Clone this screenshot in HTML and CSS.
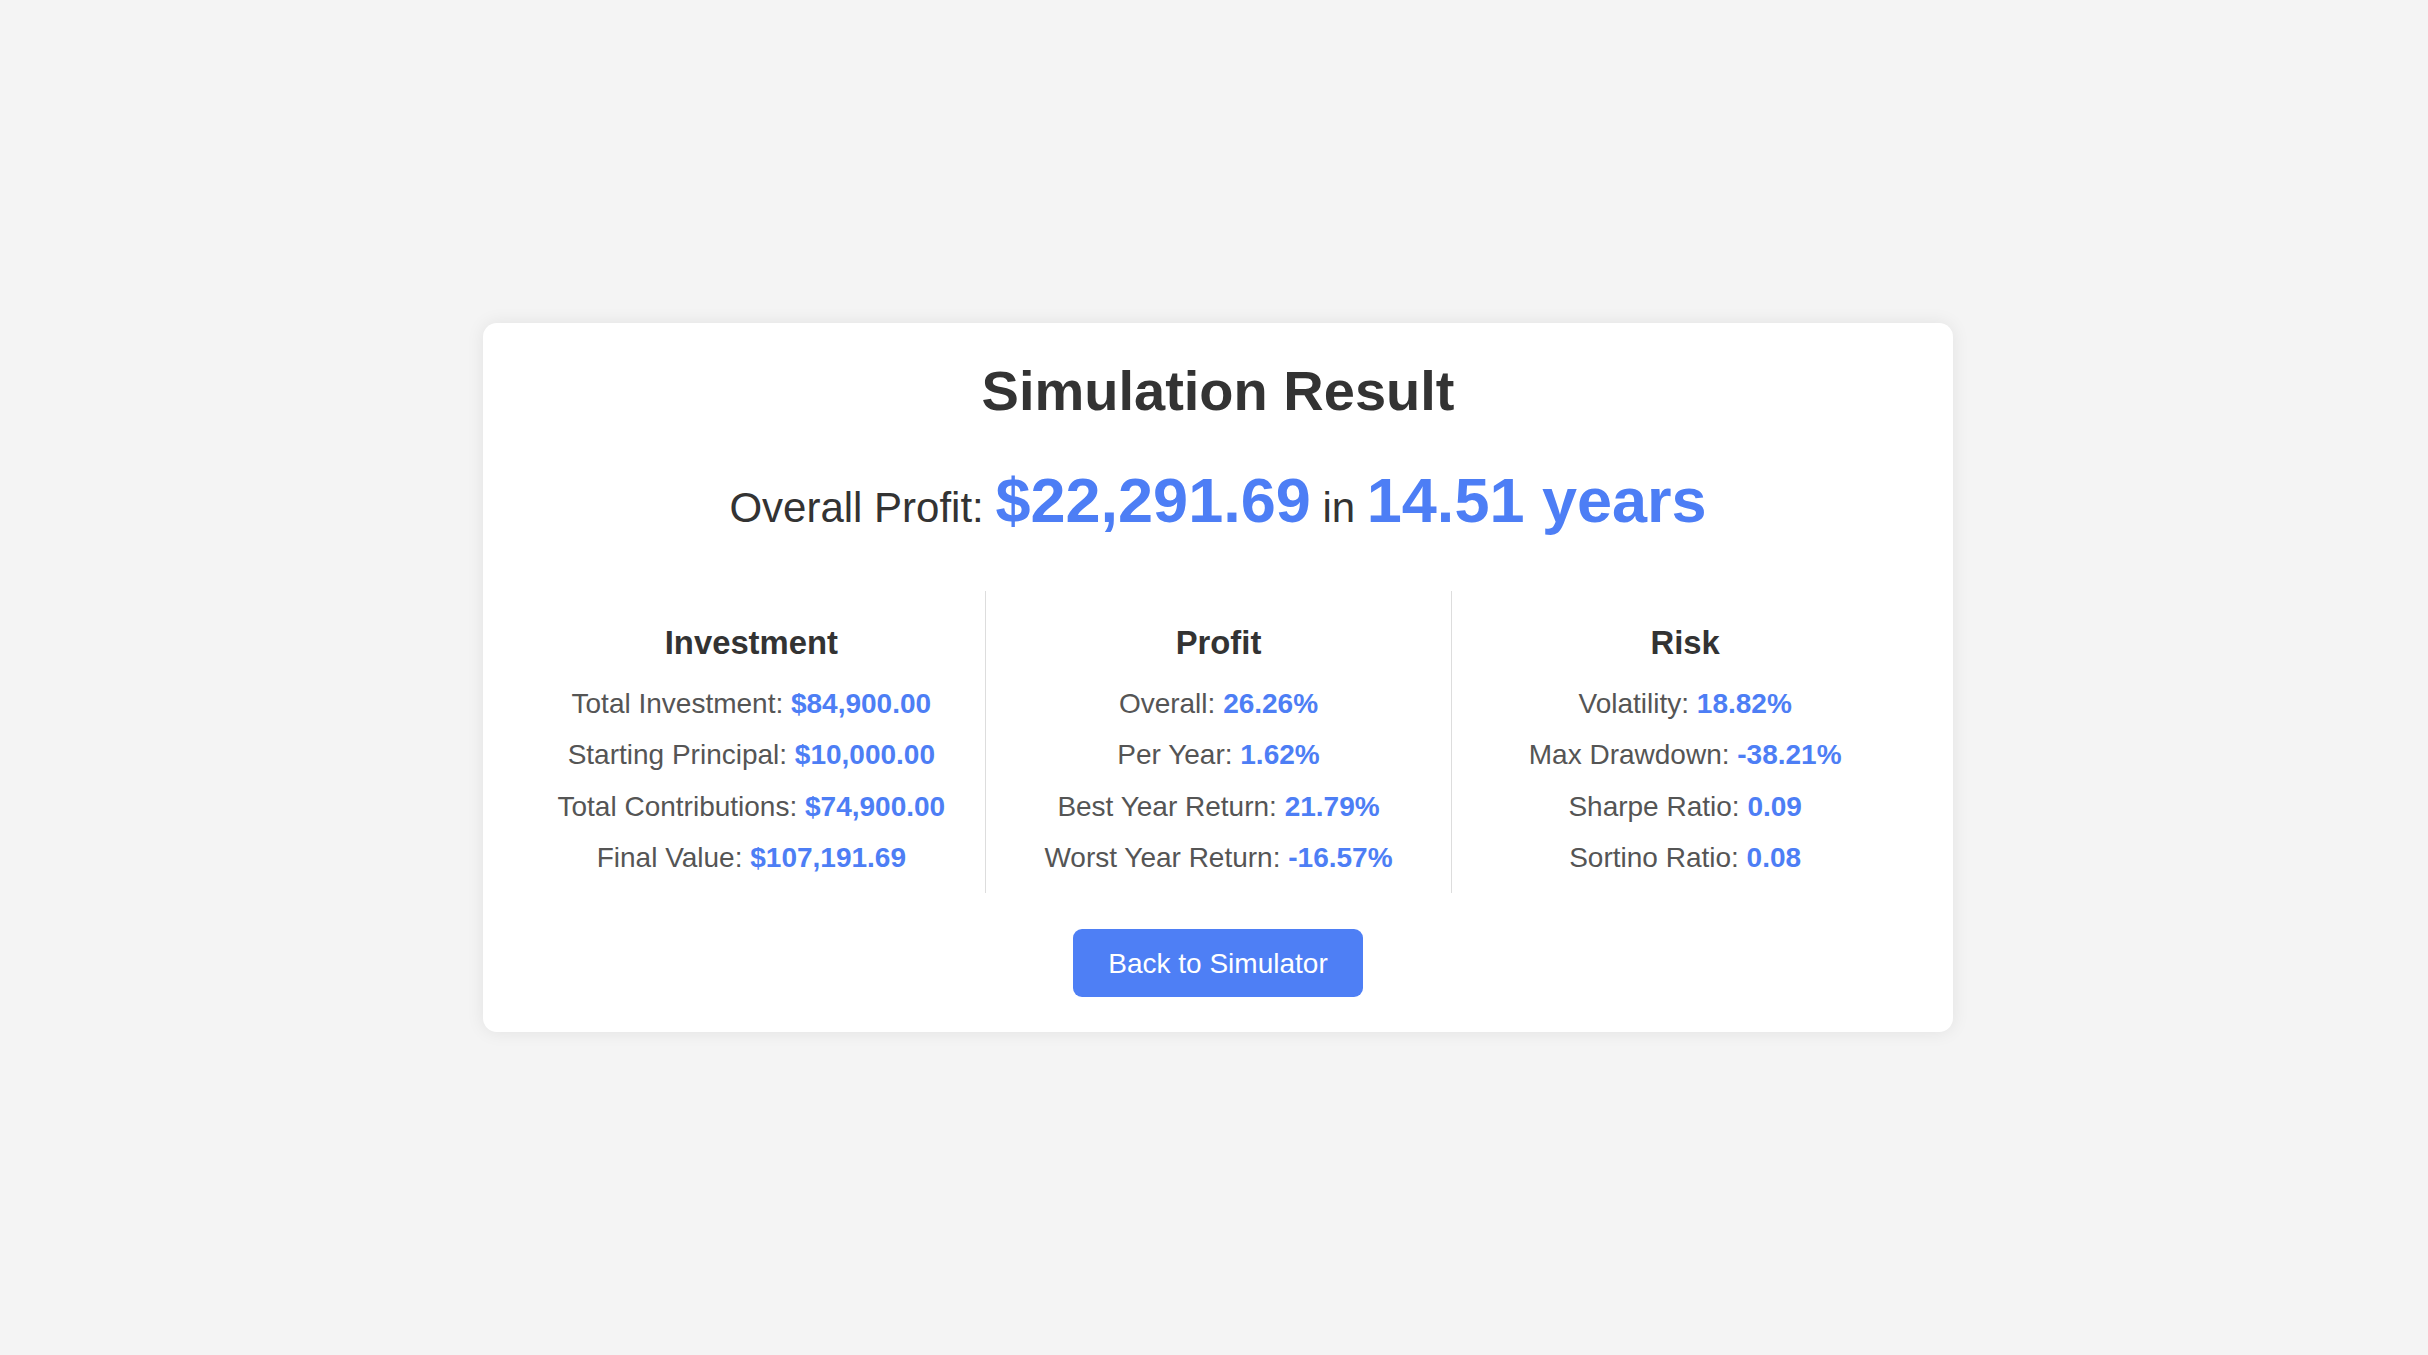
FILE: index.html
```html
<!DOCTYPE html>
<html lang="en">
<head>
<meta charset="utf-8">
<title>Simulation Result</title>
<link rel="stylesheet" href="styles.css">
</head>
<body>
<div class="page">
  <main class="card">
    <h1 class="title">Simulation Result</h1>
    <p class="summary">Overall Profit: <span class="big">$22,291.69</span> in <span class="big">14.51 years</span></p>
    <section class="columns">
      <div class="col">
        <h3 class="col-title">Investment</h3>
        <div class="item">Total Investment: <b class="val">$84,900.00</b></div>
        <div class="item">Starting Principal: <b class="val">$10,000.00</b></div>
        <div class="item">Total Contributions: <b class="val">$74,900.00</b></div>
        <div class="item">Final Value: <b class="val">$107,191.69</b></div>
      </div>
      <div class="col">
        <h3 class="col-title">Profit</h3>
        <div class="item">Overall: <b class="val">26.26%</b></div>
        <div class="item">Per Year: <b class="val">1.62%</b></div>
        <div class="item">Best Year Return: <b class="val">21.79%</b></div>
        <div class="item">Worst Year Return: <b class="val">-16.57%</b></div>
      </div>
      <div class="col">
        <h3 class="col-title">Risk</h3>
        <div class="item">Volatility: <b class="val">18.82%</b></div>
        <div class="item">Max Drawdown: <b class="val">-38.21%</b></div>
        <div class="item">Sharpe Ratio: <b class="val">0.09</b></div>
        <div class="item">Sortino Ratio: <b class="val">0.08</b></div>
      </div>
    </section>
    <button class="back" type="button">Back to Simulator</button>
  </main>
</div>
</body>
</html>
```
FILE: styles.css
```css
html, body {
  margin: 0;
  padding: 0;
  background: #f4f4f4;
}

body {
  font-family: "Liberation Sans", Arial, sans-serif;
  color: #333;
}

.page {
  min-height: 100vh;
  display: flex;
  align-items: center;
  justify-content: center;
  padding-left: 8px;
  box-sizing: border-box;
}

.card {
  width: 1470px;
  box-sizing: border-box;
  background: #fff;
  border-radius: 14px;
  box-shadow: 0 0 18px rgba(0, 0, 0, 0.08);
  padding: 36px 35px 35px;
  display: flex;
  flex-direction: column;
  text-align: center;
}

.title {
  margin: 0;
  font-size: 56px;
  line-height: 64px;
  font-weight: bold;
  color: #333;
}

.summary {
  margin: 41px 0 0;
  font-size: 42px;
  line-height: 72px;
  color: #333;
}

.big {
  font-size: 63px;
  font-weight: bold;
  color: #4d7ef5;
}

.columns {
  margin-top: 47px;
  display: grid;
  grid-template-columns: 1fr 1fr 1fr;
}

.col {
  display: flex;
  flex-direction: column;
  align-items: center;
  padding: 32px 0 19px;
}

.col + .col {
  border-left: 1px solid #dddddd;
}

.col-title {
  margin: 0 0 25.5px;
  font-size: 32.8px;
  line-height: 39px;
  font-weight: bold;
  color: #333;
}

.item {
  font-size: 28px;
  line-height: 33.6px;
  color: #555;
}

.item + .item {
  margin-top: 17.7px;
}

.val {
  font-weight: bold;
  color: #4d7ef5;
}

.back {
  align-self: center;
  margin-top: 36px;
  padding: 17.5px 35px;
  border: none;
  border-radius: 9px;
  background: #4e7ff5;
  color: #fff;
  font-family: "Liberation Sans", Arial, sans-serif;
  font-size: 28px;
  line-height: 33px;
  cursor: pointer;
}
```
